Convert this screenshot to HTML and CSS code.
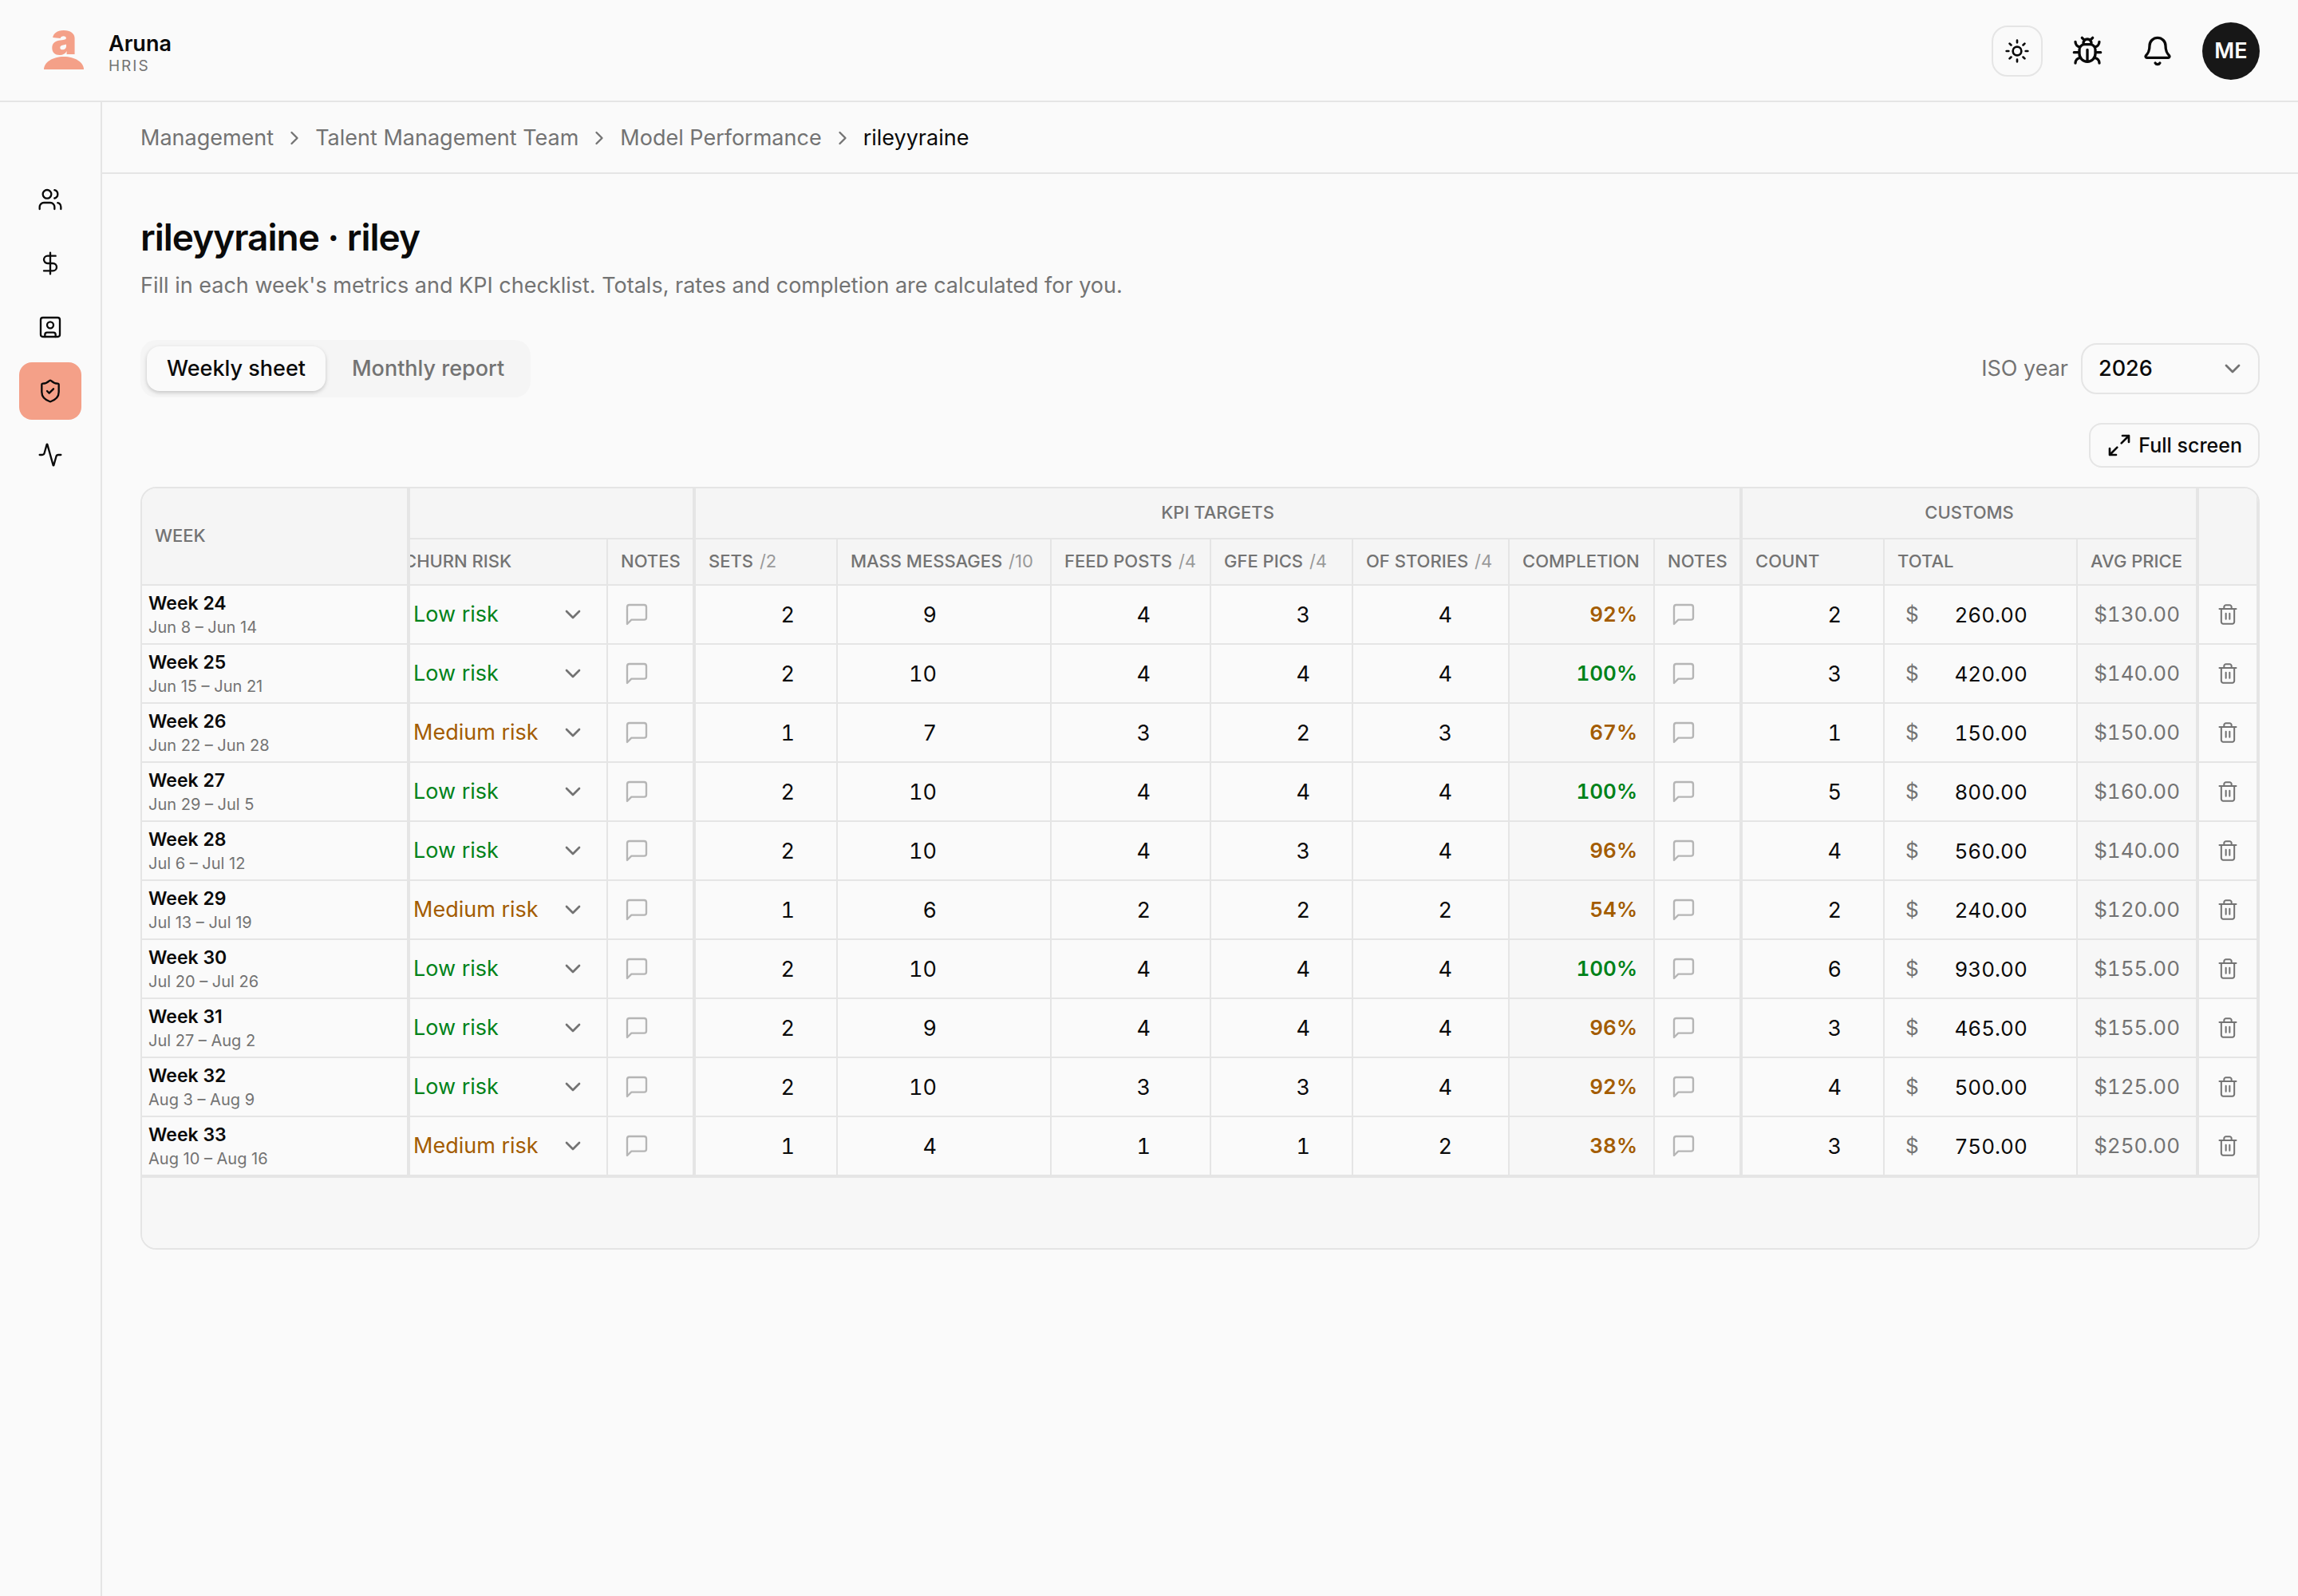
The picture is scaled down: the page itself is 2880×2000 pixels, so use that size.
FILE: index.html
```html
<!DOCTYPE html>
<html lang="en">
<head>
    <meta charset="UTF-8">
    <meta name="viewport" content="width=device-width, initial-scale=1.0">
    <title>rileyyraine · Model Performance</title>
    <link rel="stylesheet" href="styles.css">
</head>
<body>
    <!-- Icon sprite -->
    <svg class="sprite" aria-hidden="true">
        <symbol id="i-chevron-down" viewBox="0 0 24 24"><path d="m6 9 6 6 6-6"/></symbol>
        <symbol id="i-chevron-right" viewBox="0 0 24 24"><path d="m9 18 6-6-6-6"/></symbol>
        <symbol id="i-note" viewBox="0 0 24 24"><path d="M21 15a2 2 0 0 1-2 2H7l-4 4V5a2 2 0 0 1 2-2h14a2 2 0 0 1 2 2z"/></symbol>
        <symbol id="i-trash" viewBox="0 0 24 24"><path d="M3 6h18M19 6v14c0 1-1 2-2 2H7c-1 0-2-1-2-2V6M8 6V4c0-1 1-2 2-2h4c1 0 2 1 2 2v2M10 11v6M14 11v6"/></symbol>
    </svg>

    <header class="topbar">
        <a class="brand" href="#">
            <svg class="brand-logo" viewBox="0 0 60 56" aria-hidden="true">
                <text x="32" y="31" text-anchor="middle">a</text>
                <path d="M7 50C7 41 18 34 32 34S57 41 57 50z"/>
            </svg>
            <span class="brand-text">
                <span class="brand-name">Aruna</span>
                <span class="brand-sub">HRIS</span>
            </span>
        </a>
        <div class="topbar-actions">
            <button class="icon-button outlined" aria-label="Toggle theme">
                <svg class="icon" viewBox="0 0 24 24"><circle cx="12" cy="12" r="4"/><path d="M12 2v2M12 20v2M4.930 4.930l1.410 1.410M17.660 17.660l1.410 1.410M2 12h2M20 12h2M6.340 17.660l-1.410 1.410M19.070 4.930l-1.410 1.410"/></svg>
            </button>
            <button class="icon-button" aria-label="Report a bug">
                <svg class="icon icon-lg" viewBox="0 0 24 24"><path d="m8 2 1.880 1.880M14.120 3.880 16 2M9 7.130v-1a3.003 3.003 0 1 1 6 0v1M12 20c-3.300 0-6-2.700-6-6v-3a4 4 0 0 1 4-4h4a4 4 0 0 1 4 4v3c0 3.300-2.700 6-6 6M12 20v-9M6.530 9C4.600 8.800 3 7.100 3 5M6 13H2M3 21c0-2.100 1.700-3.900 3.800-4M20.970 5c0 2.100-1.600 3.800-3.500 4M22 13h-4M17.200 17c2.100.1 3.800 1.900 3.800 4"/></svg>
            </button>
            <button class="icon-button" aria-label="Notifications">
                <svg class="icon icon-lg" viewBox="0 0 24 24"><path d="M10.268 21a2 2 0 0 0 3.464 0M3.262 15.326A1 1 0 0 0 4 17h16a1 1 0 0 0 .74-1.673C19.410 13.956 18 12.499 18 8A6 6 0 0 0 6 8c0 4.499-1.411 5.956-2.738 7.326"/></svg>
            </button>
            <button class="avatar" aria-label="Account">ME</button>
        </div>
    </header>

    <div class="shell">
        <nav class="sidebar" aria-label="Main">
            <a class="side-link" href="#" aria-label="People">
                <svg class="icon thin" viewBox="0 0 24 24"><path d="M16 21v-2a4 4 0 0 0-4-4H6a4 4 0 0 0-4 4v2M16 3.128a4 4 0 0 1 0 7.744M22 21v-2a4 4 0 0 0-3-3.870"/><circle cx="9" cy="7" r="4"/></svg>
            </a>
            <a class="side-link" href="#" aria-label="Payroll">
                <svg class="icon thin" viewBox="0 0 24 24"><path d="M12 2v20M17 5H9.500a3.500 3.500 0 0 0 0 7h5a3.500 3.500 0 0 1 0 7H6"/></svg>
            </a>
            <a class="side-link" href="#" aria-label="Profiles">
                <svg class="icon thin" viewBox="0 0 24 24"><rect x="3" y="3" width="18" height="18" rx="2"/><circle cx="12" cy="10" r="3"/><path d="M7 21v-2a2 2 0 0 1 2-2h6a2 2 0 0 1 2 2v2"/></svg>
            </a>
            <a class="side-link active" href="#" aria-label="Management" aria-current="page">
                <svg class="icon thin" viewBox="0 0 24 24"><path d="M20 13c0 5-3.500 7.500-7.660 8.950a1 1 0 0 1-.67-.01C7.500 20.500 4 18 4 13V6a1 1 0 0 1 1-1c2 0 4.500-1.200 6.240-2.720a1.170 1.170 0 0 1 1.520 0C14.510 3.810 17 5 19 5a1 1 0 0 1 1 1zM9 12l2 2 4-4"/></svg>
            </a>
            <a class="side-link" href="#" aria-label="Activity">
                <svg class="icon thin" viewBox="0 0 24 24"><path d="M22 12h-2.480a2 2 0 0 0-1.930 1.460l-2.350 8.360a.25.25 0 0 1-.48 0L9.240 2.180a.25.25 0 0 0-.48 0l-2.350 8.360A2 2 0 0 1 4.490 12H2"/></svg>
            </a>
        </nav>

        <div class="page">
            <nav class="breadcrumb" aria-label="Breadcrumb">
                <a href="#">Management</a>
                <svg class="icon crumb-sep"><use href="#i-chevron-right"/></svg>
                <a href="#">Talent Management Team</a>
                <svg class="icon crumb-sep"><use href="#i-chevron-right"/></svg>
                <a href="#">Model Performance</a>
                <svg class="icon crumb-sep"><use href="#i-chevron-right"/></svg>
                <span class="crumb-current" aria-current="page">rileyyraine</span>
            </nav>

            <main class="content">
                <h1>rileyyraine · riley</h1>
                <p class="lead">Fill in each week's metrics and KPI checklist. Totals, rates and completion are calculated for you.</p>

                <div class="toolbar">
                    <div class="tabs" role="tablist">
                        <button class="tab active" role="tab" aria-selected="true">Weekly sheet</button>
                        <button class="tab" role="tab" aria-selected="false">Monthly report</button>
                    </div>
                    <div class="year-field">
                        <label for="isoYear">ISO year</label>
                        <div class="select-wrap year-wrap">
                            <select id="isoYear" class="year-select">
                                <option>2026</option>
                            </select>
                            <svg class="icon select-arrow"><use href="#i-chevron-down"/></svg>
                        </div>
                    </div>
                </div>

                <div class="sheet-actions">
                    <button class="fullscreen">
                        <svg class="icon" viewBox="0 0 24 24"><path d="M15 3h6v6M21 3l-7 7M3 21l7-7M9 21H3v-6"/></svg>
                        Full screen
                    </button>
                </div>

                <div class="sheet">
                    <table>
                        <colgroup>
                            <col class="c-week">
                            <col class="c-risk">
                            <col class="c-notes">
                            <col class="c-num">
                            <col class="c-mass">
                            <col class="c-feed">
                            <col class="c-num">
                            <col class="c-stories">
                            <col class="c-done">
                            <col class="c-notes">
                            <col class="c-num">
                            <col class="c-total">
                            <col class="c-avg">
                            <col class="c-trash">
                        </colgroup>
                        <thead>
                            <tr class="groups">
                                <th class="group-end" rowspan="2">Week</th>
                                <th class="group-end" colspan="2"></th>
                                <th class="group-end" colspan="7">KPI targets</th>
                                <th class="group-end" colspan="3">Customs</th>
                                <th rowspan="2"></th>
                            </tr>
                            <tr class="columns">
                                <th class="scrolled">Churn risk</th>
                                <th class="group-end">Notes</th>
                                <th>Sets <span>/2</span></th>
                                <th>Mass messages <span>/10</span></th>
                                <th>Feed posts <span>/4</span></th>
                                <th>GFE pics <span>/4</span></th>
                                <th>OF stories <span>/4</span></th>
                                <th>Completion</th>
                                <th class="group-end">Notes</th>
                                <th>Count</th>
                                <th>Total</th>
                                <th class="group-end">Avg price</th>
                            </tr>
                        </thead>
                        <tbody id="weeks"></tbody>
                        <tfoot>
                            <tr><td colspan="14"></td></tr>
                        </tfoot>
                    </table>
                </div>
            </main>
        </div>
    </div>

    <script src="script.js"></script>
</body>
</html>
```

FILE: styles.css
```css
* {
    margin: 0;
    padding: 0;
    box-sizing: border-box;
}

:root {
    --bg: #fafafa;
    --head: #f5f5f5;
    --calc: #f7f7f7;
    --line: #e5e5e5;
    --text: #0a0a0a;
    --muted: #737373;
    --accent: #f4a088;
    --good: #008219;
    --warn: #a35c00;
}

body {
    min-height: 100vh;
    display: flex;
    flex-direction: column;
    background-color: var(--bg);
    color: var(--text);
    font-family: Inter, "Liberation Sans", sans-serif;
    font-size: 27px;
    line-height: 40px;
}

button, input, select {
    font: inherit;
    color: inherit;
    background: none;
    border: none;
    outline: none;
}

button {
    cursor: pointer;
}

a {
    color: inherit;
    text-decoration: none;
}

.sprite {
    display: none;
}

.icon {
    display: block;
    flex-shrink: 0;
    width: 32px;
    height: 32px;
    fill: none;
    stroke: currentColor;
    stroke-width: 2;
    stroke-linecap: round;
    stroke-linejoin: round;
}

.icon-lg {
    width: 40px;
    height: 40px;
}

.thin {
    stroke-width: 1.75;
}

/* Top bar */
.topbar {
    display: flex;
    align-items: center;
    justify-content: space-between;
    height: 128px;
    padding: 2px 48px 0;
    border-bottom: 2px solid var(--line);
}

.brand {
    display: flex;
    align-items: center;
    gap: 28px;
    padding-top: 2px;
}

.brand-logo {
    width: 60px;
    height: 56px;
    overflow: visible;
    fill: var(--accent);
}

.brand-logo text {
    font-size: 54px;
    font-weight: 900;
}

.brand-text {
    display: flex;
    flex-direction: column;
}

.brand-name {
    font-weight: 600;
    line-height: 36px;
}

.brand-sub {
    color: var(--muted);
    font-size: 19px;
    line-height: 20px;
    letter-spacing: 2px;
}

.topbar-actions {
    display: flex;
    align-items: center;
    gap: 24px;
}

.icon-button {
    display: flex;
    align-items: center;
    justify-content: center;
    width: 64px;
    height: 64px;
    border-radius: 20px;
}

.outlined {
    border: 2px solid var(--line);
}

.avatar {
    width: 72px;
    height: 72px;
    border-radius: 50%;
    background-color: #171717;
    color: #fafafa;
    font-weight: 600;
}

/* Layout */
.shell {
    flex: 1;
    display: flex;
}

.sidebar {
    display: flex;
    flex-direction: column;
    gap: 8px;
    width: 128px;
    padding: 86px 24px 24px;
    border-right: 2px solid var(--line);
}

.side-link {
    display: flex;
    align-items: center;
    justify-content: center;
    height: 72px;
    border-radius: 16px;
}

.side-link.active {
    background-color: var(--accent);
}

.page {
    flex: 1;
    min-width: 0;
}

.breadcrumb {
    display: flex;
    align-items: center;
    gap: 12px;
    height: 90px;
    padding: 2px 48px 0;
    border-bottom: 2px solid var(--line);
    color: var(--muted);
}

.crumb-sep {
    width: 28px;
    height: 28px;
}

.crumb-current {
    color: var(--text);
}

.content {
    padding: 48px;
}

h1 {
    font-size: 46px;
    font-weight: 600;
    line-height: 62px;
    letter-spacing: -1px;
}

.lead {
    margin-top: 10px;
    color: var(--muted);
}

/* Toolbar */
.toolbar {
    display: flex;
    align-items: center;
    justify-content: space-between;
    margin-top: 48px;
}

.tabs {
    display: flex;
    gap: 8px;
    padding: 8px;
    border-radius: 20px;
    background-color: var(--head);
}

.tab {
    height: 56px;
    padding: 0 25px;
    border-radius: 16px;
    color: var(--muted);
    font-weight: 500;
}

.tab.active {
    background-color: var(--bg);
    color: var(--text);
    box-shadow: 0 2px 6px rgba(0, 0, 0, 0.1), 0 2px 4px rgba(0, 0, 0, 0.1);
}

.year-field {
    display: flex;
    align-items: center;
    gap: 16px;
    color: var(--muted);
}

.select-wrap {
    position: relative;
    display: flex;
    align-items: center;
}

.select-wrap select {
    width: 100%;
    appearance: none;
}

.select-arrow {
    position: absolute;
    right: 18px;
    color: var(--muted);
    pointer-events: none;
}

.year-wrap {
    width: 224px;
}

.year-select {
    height: 64px;
    padding: 0 20px;
    border: 2px solid var(--line);
    border-radius: 20px;
    color: var(--text);
    font-weight: 500;
}

.sheet-actions {
    display: flex;
    justify-content: flex-end;
    margin: 32px 0 24px;
}

.fullscreen {
    display: flex;
    align-items: center;
    gap: 8px;
    height: 56px;
    padding: 0 20px;
    border: 2px solid var(--line);
    border-radius: 16px;
    font-size: 25px;
    font-weight: 500;
}

/* Weekly sheet */
.sheet {
    overflow: hidden;
    border: 2px solid var(--line);
    border-radius: 20px;
}

table {
    width: 100%;
    table-layout: fixed;
    border-collapse: separate;
    border-spacing: 0;
}

.c-week { width: 336px; }
.c-risk { width: 248px; }
.c-notes { width: 110px; }
.c-num { width: 178px; }
.c-mass { width: 268px; }
.c-feed { width: 200px; }
.c-stories { width: 196px; }
.c-done { width: 182px; }
.c-total { width: 242px; }
.c-avg { width: 152px; }
.c-trash { width: 74px; }

th, td {
    border-right: 2px solid var(--line);
    border-bottom: 2px solid var(--line);
    white-space: nowrap;
}

.group-end {
    border-right-width: 4px;
}

thead th {
    padding: 0 16px 2px;
    background-color: var(--head);
    color: var(--muted);
    font-size: 22px;
    font-weight: 500;
    line-height: 32px;
    text-align: left;
    text-transform: uppercase;
}

thead th span {
    margin-left: 2px;
    font-weight: 400;
    opacity: 0.7;
}

.groups th {
    height: 64px;
}

.groups th[colspan] {
    text-align: center;
}

.columns th {
    height: 58px;
}

.columns .scrolled {
    overflow: hidden;
    text-indent: -8px;
    padding-left: 0;
}

tbody td, tbody th {
    height: 74px;
}

.week {
    padding: 0 8px;
    text-align: left;
    font-size: 23px;
    font-weight: 600;
    line-height: 32px;
}

.week small {
    display: block;
    color: var(--muted);
    font-size: 20px;
    font-weight: 400;
    line-height: 28px;
}

.risk {
    height: 72px;
    padding-left: 4px;
}

.risk-low {
    color: var(--good);
}

.risk-medium {
    color: var(--warn);
}

td .select-arrow {
    right: 26px;
}

.number {
    display: block;
    width: 144px;
    height: 72px;
    padding-right: 20px;
    text-align: right;
    font-variant-numeric: tabular-nums;
}

.money {
    display: flex;
    align-items: center;
    padding-left: 26px;
    color: var(--muted);
    font-size: 26px;
}

.money .number {
    color: var(--text);
    width: 156px;
}

.calc {
    padding-right: 20px;
    background-color: var(--calc);
    color: var(--muted);
    font-size: 26px;
    text-align: right;
    font-variant-numeric: tabular-nums;
}

.done {
    font-weight: 600;
}

.done-full {
    color: var(--good);
}

.done-part {
    color: var(--warn);
}

.cell-button {
    display: flex;
    align-items: center;
    height: 72px;
    padding: 0 20px;
    color: var(--muted);
}

.cell-button .icon {
    stroke-width: 1.75;
}

.note-button {
    opacity: 0.5;
}

.trash-button {
    width: 100%;
    justify-content: center;
    padding: 0;
}

.trash-button .icon {
    width: 28px;
    height: 28px;
}

tfoot td {
    height: 90px;
    border-right: none;
    border-bottom: none;
    border-top: 2px solid var(--line);
    background-color: var(--calc);
}
```

FILE: script.js
```js
// week, dates, churn risk, [sets, mass messages, feed posts, gfe pics, of stories], completion, customs count, customs total
const weeks = [
    [24, 'Jun 8 – Jun 14', 'Low', [2, 9, 4, 3, 4], 92, 2, 260],
    [25, 'Jun 15 – Jun 21', 'Low', [2, 10, 4, 4, 4], 100, 3, 420],
    [26, 'Jun 22 – Jun 28', 'Medium', [1, 7, 3, 2, 3], 67, 1, 150],
    [27, 'Jun 29 – Jul 5', 'Low', [2, 10, 4, 4, 4], 100, 5, 800],
    [28, 'Jul 6 – Jul 12', 'Low', [2, 10, 4, 3, 4], 96, 4, 560],
    [29, 'Jul 13 – Jul 19', 'Medium', [1, 6, 2, 2, 2], 54, 2, 240],
    [30, 'Jul 20 – Jul 26', 'Low', [2, 10, 4, 4, 4], 100, 6, 930],
    [31, 'Jul 27 – Aug 2', 'Low', [2, 9, 4, 4, 4], 96, 3, 465],
    [32, 'Aug 3 – Aug 9', 'Low', [2, 10, 3, 3, 4], 92, 4, 500],
    [33, 'Aug 10 – Aug 16', 'Medium', [1, 4, 1, 1, 2], 38, 3, 750]
];

const kpis = ['Sets', 'Mass messages', 'Feed posts', 'GFE pics', 'OF stories'];

function icon(name, cls) {
    return `<svg class="icon ${cls || ''}"><use href="#i-${name}"/></svg>`;
}

function numberInput(label, value) {
    return `<input class="number" type="text" inputmode="decimal" aria-label="${label}" value="${value}">`;
}

function noteCell(label) {
    return `<td class="group-end"><button class="cell-button note-button" aria-label="${label}">${icon('note')}</button></td>`;
}

document.getElementById('weeks').innerHTML = weeks.map(([week, dates, risk, values, done, count, total]) => {
    const name = `Week ${week}`;
    return `
        <tr>
            <th class="week group-end" scope="row">${name}<small>${dates}</small></th>
            <td>
                <div class="select-wrap">
                    <select class="risk risk-${risk.toLowerCase()}" aria-label="${name} churn risk">
                        <option>${risk} risk</option>
                    </select>
                    ${icon('chevron-down', 'select-arrow')}
                </div>
            </td>
            ${noteCell(name + ' churn notes')}
            ${values.map((value, i) => `<td>${numberInput(name + ' ' + kpis[i], value)}</td>`).join('')}
            <td class="calc done ${done === 100 ? 'done-full' : 'done-part'}">${done}%</td>
            ${noteCell(name + ' KPI notes')}
            <td>${numberInput(name + ' customs count', count)}</td>
            <td><div class="money">$${numberInput(name + ' customs total', total.toFixed(2))}</div></td>
            <td class="calc group-end">$${(total / count).toFixed(2)}</td>
            <td><button class="cell-button trash-button" aria-label="Delete ${name}">${icon('trash')}</button></td>
        </tr>`;
}).join('');
```
